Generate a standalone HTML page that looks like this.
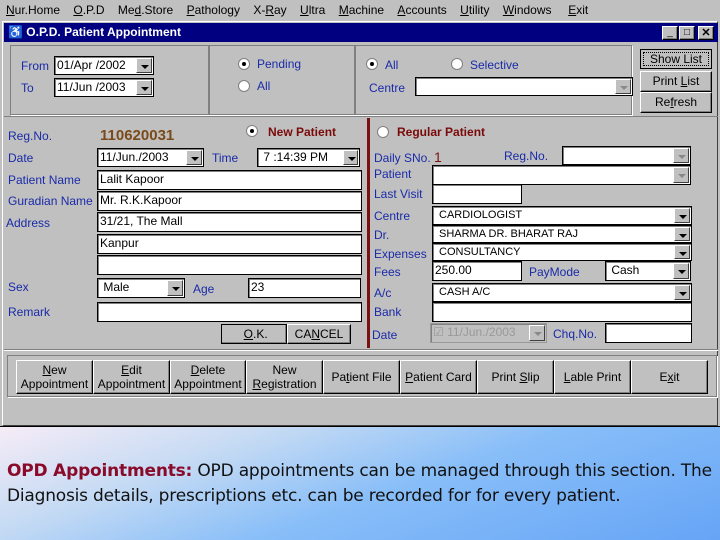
<!DOCTYPE html>
<html><head><meta charset="utf-8"><style>
*{margin:0;padding:0;box-sizing:border-box}
body{width:720px;height:540px;overflow:hidden;background:#c0c0c0;font-family:"Liberation Sans",sans-serif;font-size:12px;position:relative}
.a{position:absolute;white-space:nowrap}
.l{position:absolute;color:#1a2aa8;font-size:12px;white-space:nowrap}
.box{position:absolute;background:#fff;border:1px solid #000;box-shadow:inset 1px 1px 0 #808080;font-size:12px;padding-left:2px;line-height:17px;white-space:nowrap;overflow:hidden}
.dd{position:absolute;right:1px;top:1px;bottom:1px;width:16px;background:#c0c0c0;border:1px solid;border-color:#fff #404040 #404040 #fff}
.dd:after{content:"";position:absolute;left:4px;top:6px;border:4px solid transparent;border-top:4px solid #000;border-bottom:0}
.dis:after{border-top-color:#888}
.btn{position:absolute;background:#c0c0c0;border:1px solid;border-color:#fff #000 #000 #fff;box-shadow:inset -1px -1px 0 #808080;text-align:center;font-size:12px;color:#000;white-space:nowrap}
.rad{position:absolute;width:12px;height:12px;border-radius:50%;background:#fff;border:1px solid #808080}
.rad.on:after{content:"";position:absolute;left:3px;top:3px;width:4px;height:4px;border-radius:50%;background:#000}
.grp{position:absolute;border:1px solid #808080;box-shadow:1px 1px 0 #fff}
.up{font-size:11px;padding-left:6px}
u{text-decoration:underline}
</style></head><body>
<div class="a" style="top:3px;left:6px;font-size:12px">
<span><u>N</u>ur.Home</span>&nbsp;&nbsp;&nbsp;&nbsp;<span><u>O</u>.P.D</span>&nbsp;&nbsp;&nbsp;&nbsp;<span>Me<u>d</u>.Store</span>&nbsp;&nbsp;&nbsp;&nbsp;<span><u>P</u>athology</span>&nbsp;&nbsp;&nbsp;&nbsp;<span>X-<u>R</u>ay</span>&nbsp;&nbsp;&nbsp;&nbsp;<span><u>U</u>ltra</span>&nbsp;&nbsp;&nbsp;&nbsp;<span><u>M</u>achine</span>&nbsp;&nbsp;&nbsp;&nbsp;<span><u>A</u>ccounts</span>&nbsp;&nbsp;&nbsp;&nbsp;<span><u>U</u>tility</span>&nbsp;&nbsp;&nbsp;&nbsp;<span><u>W</u>indows</span>&nbsp;&nbsp;&nbsp;&nbsp;&nbsp;<span><u>E</u>xit</span></div>
<div class="a" style="left:2px;top:21px;width:716px;height:405px;border:1px solid;border-color:#fff #404040 #404040 #fff"></div>
<div class="a" style="left:4px;top:23px;width:714px;height:19px;background:#000080"></div>
<div class="a" style="left:8px;top:25px;color:#fff;font-weight:bold;font-size:12px">♿ O.P.D. Patient Appointment</div>
<div class="btn" style="left:662px;top:26px;width:16px;height:14px;font-size:10px;line-height:12px">_</div>
<div class="btn" style="left:679px;top:26px;width:16px;height:14px;font-size:10px;line-height:12px">□</div>
<div class="btn" style="left:698px;top:26px;width:16px;height:14px;font-size:11px;line-height:12px;font-weight:bold">✕</div>
<div class="grp" style="left:10px;top:45px;width:199px;height:70px"></div>
<div class="grp" style="left:209px;top:45px;width:146px;height:70px"></div>
<div class="grp" style="left:355px;top:45px;width:277px;height:70px"></div>
<div class="l" style="left:21px;top:59px">From</div>
<div class="l" style="left:21px;top:81px">To</div>
<div class="box" style="left:54px;top:56px;width:100px;height:19px">01/Apr /2002<div class="dd"></div></div>
<div class="box" style="left:54px;top:78px;width:100px;height:19px">11/Jun /2003<div class="dd"></div></div>
<div class="rad on" style="left:238px;top:58px"></div><div class="l" style="left:257px;top:57px">Pending</div>
<div class="rad" style="left:238px;top:80px"></div><div class="l" style="left:257px;top:79px">All</div>
<div class="rad on" style="left:366px;top:58px"></div><div class="l" style="left:385px;top:58px">All</div>
<div class="rad" style="left:451px;top:58px"></div><div class="l" style="left:470px;top:58px">Selective</div>
<div class="l" style="left:369px;top:81px">Centre</div>
<div class="box" style="left:415px;top:77px;width:218px;height:19px"><div class="dd dis"></div></div>
<div class="btn" style="left:640px;top:49px;width:72px;height:20px;line-height:18px;border-color:#000;box-shadow:none;outline:1px dotted #000;outline-offset:-4px">Show List</div>
<div class="btn" style="left:640px;top:71px;width:72px;height:21px;line-height:19px">Print <u>L</u>ist</div>
<div class="btn" style="left:640px;top:92px;width:72px;height:21px;line-height:19px">Re<u>f</u>resh</div>
<div class="a" style="left:4px;top:116px;width:714px;height:1px;background:#808080"></div>
<div class="a" style="left:367px;top:118px;width:3px;height:230px;background:#7a1010"></div>
<div class="l" style="left:8px;top:129px">Reg.No.</div>
<div class="a" style="left:100px;top:127px;color:#7a4a1a;font-weight:bold;font-size:15px">110620031</div>
<div class="rad on" style="left:246px;top:125px"></div><div class="a" style="left:268px;top:125px;color:#7a0a0a;font-weight:bold;font-size:12px">New Patient</div>
<div class="l" style="left:8px;top:151px">Date</div>
<div class="box" style="left:97px;top:148px;width:107px;height:19px">11/Jun./2003<div class="dd"></div></div>
<div class="l" style="left:212px;top:151px">Time</div>
<div class="box" style="left:257px;top:148px;width:103px;height:19px">&nbsp;7 :14:39 PM<div class="dd" style="width:15px"></div></div>
<div class="l" style="left:8px;top:173px">Patient Name</div>
<div class="box" style="left:97px;top:170px;width:265px;height:20px">Lalit Kapoor</div>
<div class="l" style="left:8px;top:194px">Guradian Name</div>
<div class="box" style="left:97px;top:191px;width:265px;height:20px">Mr. R.K.Kapoor</div>
<div class="l" style="left:6px;top:216px">Address</div>
<div class="box" style="left:97px;top:212px;width:265px;height:20px">31/21, The Mall</div>
<div class="box" style="left:97px;top:234px;width:265px;height:20px">Kanpur</div>
<div class="box" style="left:97px;top:255px;width:265px;height:20px"></div>
<div class="l" style="left:8px;top:280px">Sex</div>
<div class="box" style="left:97px;top:278px;width:88px;height:20px">&nbsp;Male<div class="dd"></div></div>
<div class="l" style="left:193px;top:282px">Age</div>
<div class="box" style="left:248px;top:278px;width:113px;height:20px">23</div>
<div class="l" style="left:8px;top:305px">Remark</div>
<div class="box" style="left:97px;top:302px;width:265px;height:20px"></div>
<div class="btn" style="left:221px;top:324px;width:66px;height:20px;line-height:18px;border-color:#000">&nbsp;<u>O</u>.K.</div>
<div class="btn" style="left:287px;top:324px;width:64px;height:20px;line-height:18px">CA<u>N</u>CEL</div>
<div class="rad" style="left:377px;top:126px"></div><div class="a" style="left:397px;top:125px;color:#7a0a0a;font-weight:bold;font-size:12px">Regular Patient</div>
<div class="l" style="left:374px;top:149px">Daily SNo. <span style="color:#7a1010;font-size:14px">1</span></div>
<div class="l" style="left:504px;top:149px">Reg.No.</div>
<div class="box" style="left:562px;top:146px;width:129px;height:19px"><div class="dd dis"></div></div>
<div class="l" style="left:374px;top:167px">Patient</div>
<div class="box" style="left:432px;top:165px;width:259px;height:20px"><div class="dd dis"></div></div>
<div class="l" style="left:374px;top:187px">Last Visit</div>
<div class="box" style="left:432px;top:184px;width:90px;height:20px"></div>
<div class="l" style="left:374px;top:209px">Centre</div>
<div class="box up" style="left:432px;top:206px;width:260px;height:19px">CARDIOLOGIST<div class="dd"></div></div>
<div class="l" style="left:374px;top:228px">Dr.</div>
<div class="box up" style="left:432px;top:225px;width:260px;height:18px;line-height:16px">SHARMA DR. BHARAT RAJ<div class="dd"></div></div>
<div class="l" style="left:374px;top:247px">Expenses</div>
<div class="box up" style="left:432px;top:243px;width:260px;height:18px;line-height:16px">CONSULTANCY<div class="dd"></div></div>
<div class="l" style="left:374px;top:265px">Fees</div>
<div class="box" style="left:432px;top:261px;width:90px;height:20px">250.00</div>
<div class="l" style="left:529px;top:265px">PayMode</div>
<div class="box" style="left:605px;top:261px;width:86px;height:20px">&nbsp;Cash<div class="dd"></div></div>
<div class="l" style="left:374px;top:286px">A/c</div>
<div class="box up" style="left:432px;top:283px;width:260px;height:19px">CASH A/C<div class="dd"></div></div>
<div class="l" style="left:374px;top:305px">Bank</div>
<div class="box" style="left:432px;top:302px;width:260px;height:20px"></div>
<div class="l" style="left:372px;top:328px">Date</div>
<div class="box" style="left:430px;top:323px;width:117px;height:20px;background:#c0c0c0;color:#999;border-color:#999">☑ 11/Jun./2003<div class="dd dis"></div></div>
<div class="l" style="left:553px;top:327px">Chq.No.</div>
<div class="box" style="left:605px;top:323px;width:87px;height:20px"></div>
<div class="a" style="left:4px;top:349px;width:714px;height:1px;background:#808080"></div>
<div class="a" style="left:4px;top:350px;width:714px;height:1px;background:#fff"></div>
<div class="grp" style="left:7px;top:355px;width:710px;height:42px"></div>
<div class="btn" style="left:16px;top:360px;width:77px;height:34px;line-height:14px;padding-top:2px"><u>N</u>ew<br>Appointment</div>
<div class="btn" style="left:93px;top:360px;width:77px;height:34px;line-height:14px;padding-top:2px"><u>E</u>dit<br>Appointment</div>
<div class="btn" style="left:170px;top:360px;width:76px;height:34px;line-height:14px;padding-top:2px"><u>D</u>elete<br>Appointment</div>
<div class="btn" style="left:246px;top:360px;width:77px;height:34px;line-height:14px;padding-top:2px">New<br><u>R</u>egistration</div>
<div class="btn" style="left:323px;top:360px;width:77px;height:34px;line-height:32px">Pa<u>t</u>ient File</div>
<div class="btn" style="left:400px;top:360px;width:77px;height:34px;line-height:32px"><u>P</u>atient Card</div>
<div class="btn" style="left:477px;top:360px;width:77px;height:34px;line-height:32px">Print <u>S</u>lip</div>
<div class="btn" style="left:554px;top:360px;width:77px;height:34px;line-height:32px"><u>L</u>able Print</div>
<div class="btn" style="left:631px;top:360px;width:77px;height:34px;line-height:32px">E<u>x</u>it</div>
<div class="a" style="left:0;top:426px;width:720px;height:114px;border-top:1px solid #000;background:linear-gradient(160deg,#f6ecf6 0%,#c4daf4 28%,#88bef8 55%,#66a4f6 100%)"></div>
<div class="a" style="left:7px;top:461px;font-family:'DejaVu Sans',sans-serif;font-size:17px;color:#111;letter-spacing:-0.2px"><b style="color:#8a0a2a">OPD Appointments:</b> OPD appointments can be managed through this section. The</div>
<div class="a" style="left:7px;top:486px;font-family:'DejaVu Sans',sans-serif;font-size:17px;color:#111;letter-spacing:-0.2px">Diagnosis details, prescriptions etc. can be recorded for for every patient.</div>
</body></html>
